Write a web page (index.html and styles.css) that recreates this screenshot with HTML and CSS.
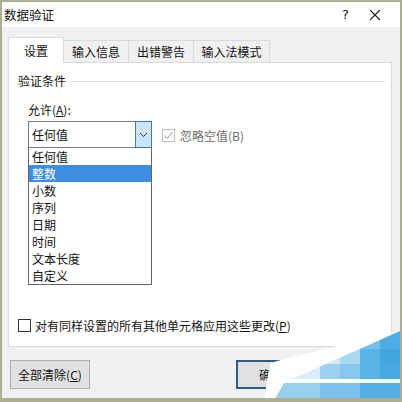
FILE: index.html
```html
<!DOCTYPE html>
<html lang="zh-CN">
<head>
  <meta charset="UTF-8" />
  <meta name="viewport" content="width=device-width, initial-scale=1" />
  <title>数据验证</title>
  <link rel="stylesheet" href="styles.css">
</head>
<body>
  <div class="window">
    <div class="titlebar">
      <span class="title">数据验证</span>
      <span class="help">?</span>
      <span class="close">
        <svg width="12" height="12" viewBox="0 0 12 12"><path d="M1 1L11 11M11 1L1 11" stroke="#222" stroke-width="1.1" fill="none"/></svg>
      </span>
    </div>
    <div class="dialog-body">
      <div class="tabs">
        <div class="tab active">设置</div>
        <div class="tab">输入信息</div>
        <div class="tab">出错警告</div>
        <div class="tab">输入法模式</div>
      </div>
      <div class="panel">
        <div class="group-title"><span>验证条件</span><div class="rule"></div></div>
        <div class="allow-label">允许(<u>A</u>):</div>
        <div class="allow-row">
          <div class="combo-wrap">
            <div class="combo">
              <span class="combo-value">任何值</span>
              <span class="combo-btn">
                <svg width="9" height="6" viewBox="0 0 9 6"><path d="M1 1L4.5 4.5L8 1" stroke="#333" stroke-width="1" fill="none"/></svg>
              </span>
            </div>
            <ul class="listbox">
              <li>任何值</li>
              <li class="selected">整数</li>
              <li>小数</li>
              <li>序列</li>
              <li>日期</li>
              <li>时间</li>
              <li>文本长度</li>
              <li>自定义</li>
            </ul>
          </div>
          <label class="check disabled">
            <span class="box">
              <svg width="11" height="11" viewBox="0 0 11 11"><path d="M1.5 5.5L4.2 8.3L9.5 2.2" stroke="#b5b5b5" stroke-width="1.2" fill="none"/></svg>
            </span>
            <span>忽略空值(B)</span>
          </label>
        </div>
        <label class="check apply-all">
          <span class="box"></span>
          <span>对有同样设置的所有其他单元格应用这些更改(<u>P</u>)</span>
        </label>
      </div>
      <div class="footer">
        <button class="btn">全部清除(<u>C</u>)</button>
        <button class="btn default">确定</button>
      </div>
    </div>
    <!-- watermark in the corner, coordinates relative to the page (x-250, y-325) -->
    <svg class="watermark" width="152" height="77" viewBox="250 325 152 77">
      <defs>
        <clipPath id="tri"><path d="M402 328 L402 377 L292 377 Z"/></clipPath>
        <clipPath id="band"><path d="M284 381 L402 381 L402 402 L272 402 Z"/></clipPath>
      </defs>
      <path d="M264 402 C266 385 268 370 271 361 C300 352 350 342 402 328 L402 402 Z" fill="#fff"/>
      <g clip-path="url(#tri)">
        <rect x="380" y="328" width="22" height="19" fill="#4eade4"/>
        <rect x="360" y="328" width="20" height="19" fill="#78c0eb"/>
        <rect x="300" y="347" width="20" height="15" fill="#e6f3fb"/>
        <rect x="320" y="347" width="20" height="15" fill="#d2eaf8"/>
        <rect x="340" y="347" width="20" height="15" fill="#a9d8f2"/>
        <rect x="360" y="347" width="20" height="15" fill="#58b3e6"/>
        <rect x="380" y="347" width="22" height="15" fill="#43a6e1"/>
        <rect x="290" y="362" width="30" height="15" fill="#d8edf9"/>
        <rect x="320" y="362" width="20" height="15" fill="#9dd1f0"/>
        <rect x="340" y="362" width="20" height="15" fill="#86c7ed"/>
        <rect x="360" y="362" width="20" height="15" fill="#58b3e6"/>
        <rect x="380" y="362" width="22" height="15" fill="#47a8e2"/>
      </g>
      <g clip-path="url(#band)">
        <rect x="270" y="381" width="50" height="21" fill="#97cfef"/>
        <rect x="320" y="381" width="40" height="21" fill="#7bc1eb"/>
        <rect x="360" y="381" width="42" height="21" fill="#52b0e5"/>
      </g>
    </svg>
  </div>
</body>
</html>
```

FILE: styles.css
```css
body {
  margin: 0;
  padding: 0;
  background: #aeae93;
  font-family: "Noto Sans CJK SC", "Noto Sans", sans-serif;
  font-size: 12px;
  color: #111;
}
.window {
  position: relative;
  width: 398px;
  height: 396px;
  margin: 2px 2px 0 2px;
  background: #f0f0f0;
  overflow: hidden;
}
.titlebar {
  height: 25px;
  background: #fff;
  display: flex;
  align-items: center;
  padding-left: 2px;
}
.title {
  font-size: 12.5px;
  flex: 1;
}
.help {
  width: 20px;
  font-size: 13px;
  font-family: "DejaVu Sans", sans-serif;
}
.close {
  width: 26px;
  margin-right: 12px;
  display: flex;
  justify-content: center;
}
.dialog-body {
  padding: 10px 8px 0 6px;
}
.tabs {
  display: flex;
  align-items: flex-end;
  height: 25px;
  position: relative;
  z-index: 1;
}
.tab {
  height: 22px;
  padding: 0;
  white-space: nowrap;
  display: flex;
  align-items: center;
  justify-content: center;
  border: 1px solid #d9d9d9;
  border-bottom: none;
  border-left: none;
  background: #f0f0f0;
  box-sizing: border-box;
  width: 65px;
}
.tab:last-child {
  width: 76px;
}
.tab.active {
  height: 26px;
  width: 56px;
  background: #fff;
  border-left: 1px solid #d9d9d9;
  margin-bottom: -1px;
}
.panel {
  height: 285px;
  background: #fff;
  border: 1px solid #d9d9d9;
  box-sizing: border-box;
  padding: 9px 6px 0 9px;
}
.group-title {
  display: flex;
  align-items: center;
  gap: 6px;
  height: 16px;
}
.rule {
  flex: 1;
  height: 1px;
  background: #dcdcdc;
  margin-top: 3px;
}
.allow-label {
  margin: 13px 0 0 10px;
  height: 16px;
}
.allow-row {
  display: flex;
  align-items: flex-start;
  margin: 4px 0 0 10px;
}
.combo-wrap {
  width: 124px;
}
.combo {
  height: 27px;
  border: 1px solid #7a7a7a;
  box-sizing: border-box;
  display: flex;
  align-items: center;
  background: #fff;
}
.combo-value {
  flex: 1;
  padding-left: 3px;
}
.combo-btn {
  width: 17px;
  height: 27px;
  margin: -1px -1px -1px 0;
  background: #cce4f7;
  border: 1px solid #3d7bab;
  box-sizing: border-box;
  display: flex;
  align-items: center;
  justify-content: center;
}
.listbox {
  list-style: none;
  margin: 0;
  padding: 0 0 2px 0;
  border: 1px solid #646464;
  border-top: none;
  height: 137px;
  box-sizing: border-box;
}
.listbox li {
  height: 17px;
  line-height: 17px;
  padding-left: 3px;
}
.listbox li.selected {
  background: #3d8ee0;
  color: #fff;
}
.check {
  display: flex;
  align-items: center;
  gap: 5px;
}
.box {
  width: 13px;
  height: 13px;
  border: 1px solid #333;
  box-sizing: border-box;
  background: #fff;
  display: flex;
  align-items: center;
  justify-content: center;
}
.check.disabled {
  color: #6d6d6d;
  margin: 6px 0 0 10px;
}
.check.disabled .box {
  border-color: #bcbcbc;
}
.apply-all {
  margin: 32px 0 0 0;
  gap: 4px;
}
.footer {
  display: flex;
  gap: 146px;
  padding: 13px 0 0 2px;
}
.btn {
  font-family: inherit;
  font-size: 12px;
  color: #111;
  height: 29px;
  padding: 0;
  background: #e1e1e1;
  border: 1px solid #adadad;
  width: 80px;
}
.btn.default {
  border: 2px solid #2d5d84;
  width: 70px;
}
.watermark {
  position: absolute;
  right: -2px;
  bottom: -6px;
}
```
